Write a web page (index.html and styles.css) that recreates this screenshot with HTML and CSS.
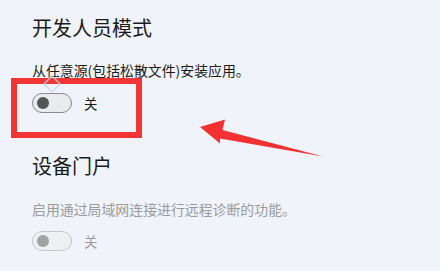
FILE: index.html
```html
<!DOCTYPE html>
<html lang="zh-CN">
<head>
<meta charset="utf-8">
<link rel="stylesheet" href="styles.css">
</head>
<body>
<div class="page">
  <section class="group">
    <h2 class="title">开发人员模式</h2>
    <p class="desc">从任意源(包括松散文件)安装应用。</p>
    <div class="toggle-row">
      <span class="toggle"><span class="knob"></span></span>
      <span class="state">关</span>
    </div>
  </section>
  <section class="group second disabled">
    <h2 class="title">设备门户</h2>
    <p class="desc">启用通过局域网连接进行远程诊断的功能。</p>
    <div class="toggle-row">
      <span class="toggle"><span class="knob"></span></span>
      <span class="state">关</span>
    </div>
  </section>
  <div class="highlight"></div>
  <svg class="arrow" width="440" height="271" viewBox="0 0 440 271">
    <polygon points="200,127 225,119.5 222.5,130 323,156.5 220,138.5 220,143.5" fill="#f23232"/>
  </svg>
  <svg class="mark" width="30" height="30" viewBox="0 0 30 30">
    <path d="M4 14 L12 6 L20 14 L12 22 Z" fill="none" stroke="#bcd9f2" stroke-width="1.5"/>
    <path d="M16 6 L26 0" stroke="#cfe3f5" stroke-width="1.5"/>
  </svg>
</div>
</body>
</html>
```
FILE: styles.css
```css
html, body {
  margin: 0;
  padding: 0;
  background: #f0f3f9;
}
.page {
  position: relative;
  width: 440px;
  height: 271px;
  overflow: hidden;
  box-sizing: border-box;
  padding: 14px 0 0 32px;
  font-family: "Noto Sans CJK SC", "Noto Sans", sans-serif;
  color: #1b1b1b;
}
.group {
  display: flex;
  flex-direction: column;
  align-items: flex-start;
}
.title {
  margin: 0;
  font-size: 20px;
  line-height: 28px;
  font-weight: 400;
}
.desc {
  margin: 18px 0 0;
  font-size: 13.9px;
  line-height: 20px;
}
.toggle-row {
  margin-top: 13px;
  display: flex;
  align-items: center;
  height: 20px;
}
.toggle {
  box-sizing: border-box;
  width: 40px;
  height: 20px;
  border: 1px solid #8a8a8a;
  border-radius: 10px;
  background: #e9ebef;
  display: flex;
  align-items: center;
  padding-left: 4px;
}
.knob {
  width: 12px;
  height: 12px;
  border-radius: 50%;
  background: #555;
}
.state {
  margin-left: 12px;
  font-size: 13.4px;
  line-height: 20px;
}
.second {
  margin-top: 39px;
}
.second .desc {
  margin-top: 19px;
}
.second .toggle-row {
  margin-top: 12px;
}
.disabled .desc,
.disabled .state {
  color: #9b9b9b;
}
.disabled .toggle {
  border-color: #c6c6c6;
  background: #eef0f4;
}
.disabled .knob {
  background: #a2a2a2;
}
.highlight {
  position: absolute;
  left: 11px;
  top: 78px;
  width: 131px;
  height: 60px;
  box-sizing: border-box;
  border: 6px solid #f23535;
}
.arrow {
  position: absolute;
  left: 0;
  top: 0;
}
.mark {
  position: absolute;
  left: 40px;
  top: 70px;
  opacity: 0.8;
}
```
